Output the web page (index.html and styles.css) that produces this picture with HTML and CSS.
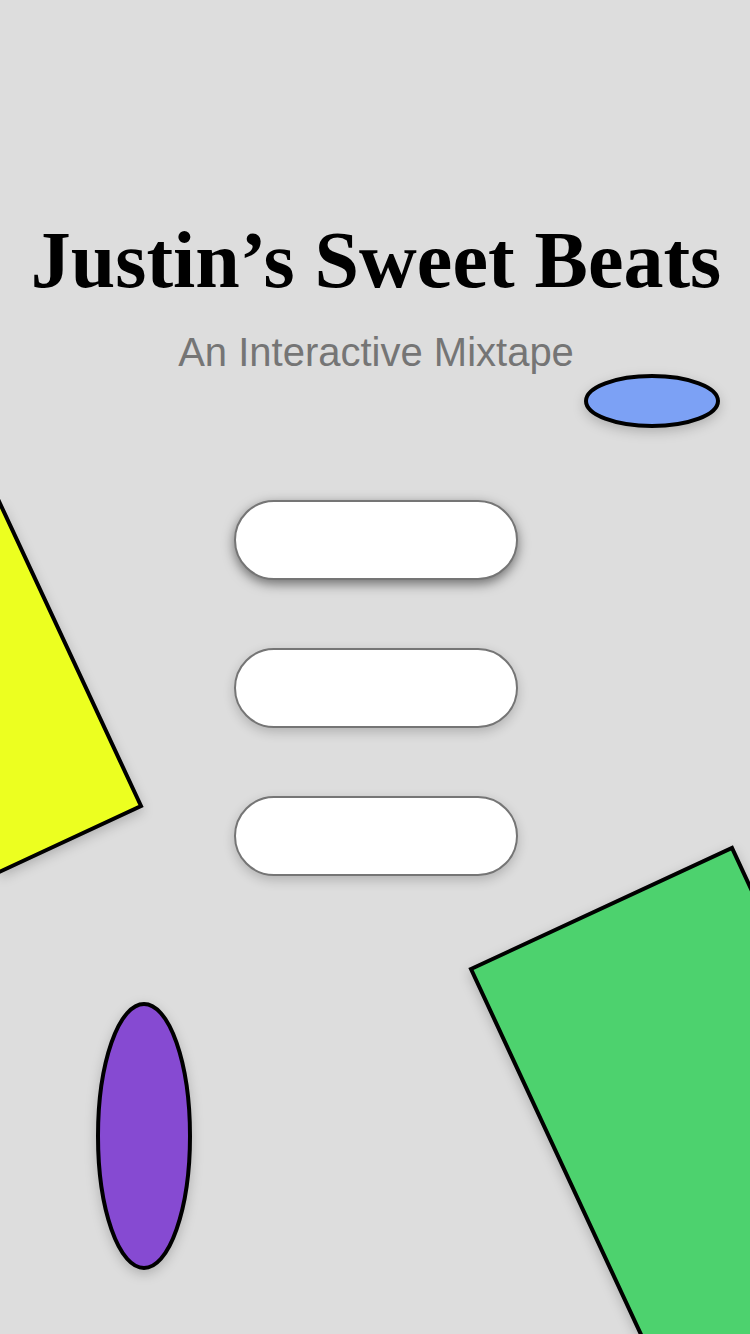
FILE: index.html
```
<!DOCTYPE html>
<html lang="en">
<head>
<meta charset="utf-8">
<meta name="viewport" content="width=device-width, initial-scale=1">
<title>Justin’s Sweet Beats</title>
<link rel="stylesheet" href="styles.css">
</head>
<body>
<main class="screen">
  <svg class="shape shape-yellow" width="160" height="400" viewBox="0 0 160 400" aria-hidden="true"><path d="M-100 -191 L141 326 L-121 448 L-362 -69 Z"/></svg>
  <svg class="shape shape-green" width="290" height="494" viewBox="0 0 290 494" aria-hidden="true"><path d="M11 129 L272 8 L552 610 L291 731 Z"/></svg>
  <svg class="shape shape-blue" width="160" height="80" viewBox="0 0 160 80" aria-hidden="true"><ellipse cx="80" cy="40" rx="66" ry="25"/></svg>
  <svg class="shape shape-purple" width="120" height="300" viewBox="0 0 120 300" aria-hidden="true"><ellipse cx="60" cy="150" rx="46" ry="132"/></svg>
  <header class="heading">
    <h1 class="title">Justin’s Sweet Beats</h1>
    <p class="subtitle">An Interactive Mixtape</p>
  </header>
  <nav class="menu" aria-label="Mixtape">
    <button class="pill pill-active" type="button" aria-label="Option 1"></button>
    <button class="pill" type="button" aria-label="Option 2"></button>
    <button class="pill" type="button" aria-label="Option 3"></button>
  </nav>
</main>
</body>
</html>
```
FILE: styles.css
```
* { box-sizing: border-box; }
body { margin: 0; background: #ddd; }
.screen {
  position: relative;
  min-height: 100vh;
  padding: 212px 0 0 2px;
  overflow: hidden;
  background: #ddd;
}
.heading { position: relative; text-align: center; white-space: nowrap; }
.title {
  margin: 0;
  font: bold 80px/96px "Liberation Serif", "Times New Roman", serif;
  color: #000;
}
.subtitle {
  margin: 20px 0 0;
  font: 40px/48px "Liberation Sans", Arial, sans-serif;
  color: #757575;
}
.menu {
  position: relative;
  display: flex;
  flex-direction: column;
  align-items: center;
  gap: 68px;
  margin-top: 124px;
}
.pill {
  width: 284px;
  height: 80px;
  padding: 0;
  border: 2px solid #757575;
  border-radius: 40px;
  background: #fff;
  box-shadow: 0 4px 12px rgba(0, 0, 0, 0.2);
}
.pill-active { box-shadow: 0 4px 12px rgba(0, 0, 0, 0.5); }
.shape {
  position: absolute;
  stroke: #000;
  stroke-width: 4px;
  filter: drop-shadow(0 4px 6px rgba(0, 0, 0, 0.2));
}
.shape-yellow { left: 0; top: 480px; fill: #ecff20; }
.shape-green { right: 0; top: 840px; fill: #4dd26e; }
.shape-blue { right: 18px; top: 361px; fill: #7ca1f5; }
.shape-purple { left: 84px; top: 986px; fill: #864ad2; }
```
